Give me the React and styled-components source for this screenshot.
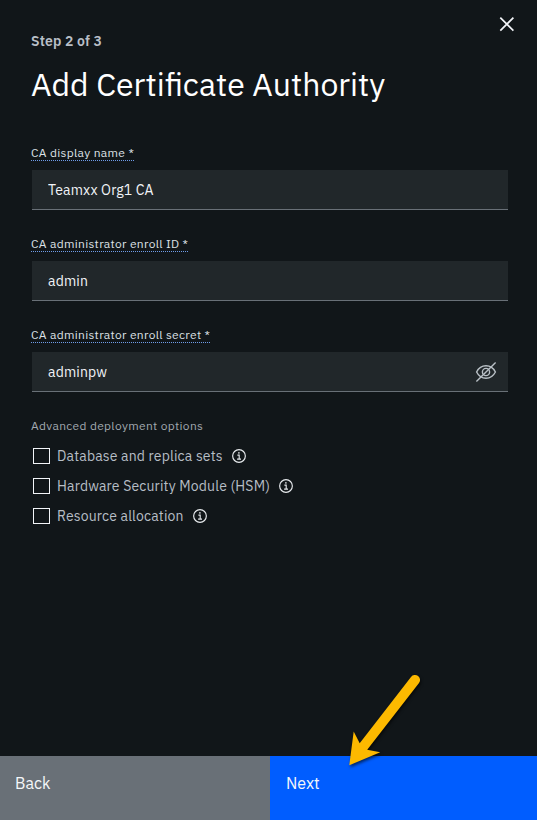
import React from 'react';
import styled, { createGlobalStyle } from 'styled-components';

const GlobalStyle = createGlobalStyle`
  * { box-sizing: border-box; }
  body {
    margin: 0;
    background: #111619;
    font-family: "IBM Plex Sans", Roboto, "Liberation Sans", sans-serif;
  }
`;

const Panel = styled.div`
  position: relative;
  display: flex;
  flex-direction: column;
  width: 537px;
  height: 820px;
  overflow: hidden;
  background: #111619;
`;

const CloseButton = styled.button`
  position: absolute;
  top: 14px;
  right: 20px;
  width: 20px;
  height: 20px;
  padding: 0;
  border: 0;
  background: none;
  svg { display: block; }
`;

const Header = styled.header`
  padding: 32px 31px 0;
`;

const Step = styled.div`
  font-size: 14px;
  font-weight: 600;
  line-height: 18px;
  letter-spacing: 0.16px;
  color: #b9bfc7;
`;

const Title = styled.h1`
  margin: 14px 0 0;
  font-size: 32px;
  font-weight: 400;
  line-height: 40px;
  color: #fff;
  white-space: nowrap;
`;

const Form = styled.form`
  display: flex;
  flex: 1;
  flex-direction: column;
  padding: 41px 29px 0 32px;
`;

const Field = styled.div`
  height: 91px;
`;

const Label = styled.label`
  display: block;
  width: fit-content;
  height: 16px;
  margin: 0 0 9px -1px;
  border-bottom: 1px dotted #6f9ce8;
  font-size: 12px;
  line-height: 16px;
  letter-spacing: 0.32px;
  color: #dde1e6;
  white-space: nowrap;
`;

const InputBox = styled.div`
  display: flex;
  align-items: center;
  height: 40px;
  padding-right: 11px;
  border-bottom: 1px solid #697077;
  background: #21272a;
`;

const Input = styled.input`
  flex: 1;
  min-width: 0;
  height: 39px;
  padding: 0 0 0 16px;
  border: 0;
  outline: 0;
  background: transparent;
  font: 400 14px/20px "IBM Plex Sans", Roboto, "Liberation Sans", sans-serif;
  letter-spacing: 0.16px;
  color: #f2f4f8;
`;

const Legend = styled.div`
  height: 16px;
  margin: 0 0 7px -1px;
  font-size: 12px;
  line-height: 16px;
  letter-spacing: 0.32px;
  color: #a2a9b0;
`;

const Option = styled.div`
  display: flex;
  align-items: center;
  height: 30px;
  padding-left: 1px;
`;

const Checkbox = styled.span`
  width: 17px;
  height: 16px;
  margin-right: 7px;
  border: 1px solid #f2f4f8;
`;

const OptionText = styled.span`
  margin-right: 9px;
  font-size: 14px;
  line-height: 20px;
  letter-spacing: 0.16px;
  color: #b7bec6;
  white-space: nowrap;
`;

const Footer = styled.footer`
  display: flex;
  height: 64px;
`;

const Action = styled.button`
  width: ${(p) => p.$width};
  padding: 0 0 10px ${(p) => p.$inset};
  border: 0;
  background: ${(p) => p.$color};
  font: 400 16px/22px "IBM Plex Sans", Roboto, "Liberation Sans", sans-serif;
  text-align: left;
  color: #f5f7fa;
`;

const Pointer = styled.svg`
  position: absolute;
  left: 340px;
  top: 665px;
  filter: drop-shadow(1px 2px 1.5px rgba(0, 0, 0, 0.6));
  pointer-events: none;
`;

const InfoIcon = () => (
  <svg width="14" height="14" viewBox="0 0 14 14" fill="none" stroke="#e8ebee">
    <circle cx="7" cy="7" r="6.35" strokeWidth="1.15" />
    <path d="M5.4 6.15H7.2V10.1M5.1 10.1H9" strokeWidth="1.1" />
    <circle cx="6.9" cy="3.9" r=".8" fill="#e8ebee" stroke="none" />
  </svg>
);

const HiddenIcon = () => (
  <svg width="22" height="22" viewBox="0 0 22 22" fill="none" stroke="#b9c0c6" strokeWidth="1.4">
    <path d="M1.6 11C3.5 7.2 7 4.8 11 4.8S18.5 7.2 20.4 11C18.5 14.8 15 17.2 11 17.2S3.5 14.8 1.6 11Z" />
    <circle cx="11" cy="11" r="3.6" />
    <path d="M1.4 20.5L20.6 1.5" />
  </svg>
);

const fields = [
  { label: 'CA display name *', value: 'Teamxx Org1 CA' },
  { label: 'CA administrator enroll ID *', value: 'admin' },
  { label: 'CA administrator enroll secret *', value: 'adminpw', hidden: true },
];

const options = [
  'Database and replica sets',
  'Hardware Security Module (HSM)',
  'Resource allocation',
];

export default function App() {
  return (
    <>
      <GlobalStyle />
      <Panel>
        <CloseButton aria-label="Close">
          <svg width="20" height="20" viewBox="0 0 20 20" stroke="#f2f4f8" strokeWidth="1.7">
            <path d="M3.3 3.6L16.4 16.7M16.4 3.6L3.3 16.7" />
          </svg>
        </CloseButton>
        <Header>
          <Step>Step 2 of 3</Step>
          <Title>Add Certificate Authority</Title>
        </Header>
        <Form>
          {fields.map((f) => (
            <Field key={f.label}>
              <Label>{f.label}</Label>
              <InputBox>
                <Input defaultValue={f.value} />
                {f.hidden && <HiddenIcon />}
              </InputBox>
            </Field>
          ))}
          <Legend>Advanced deployment options</Legend>
          {options.map((text) => (
            <Option key={text}>
              <Checkbox />
              <OptionText>{text}</OptionText>
              <InfoIcon />
            </Option>
          ))}
        </Form>
        <Footer>
          <Action $width="270px" $inset="15px" $color="#697077">Back</Action>
          <Action $width="267px" $inset="16px" $color="#005dff">Next</Action>
        </Footer>
        <Pointer width="90" height="110" viewBox="340 665 90 110" fill="#fdb900">
          <path d="M349.3 765.3L353.7 731.5L359.7 743.3L411 676.9A5 5 0 0 1 419 683.1L367.2 749.7L380.2 752.3Z" />
        </Pointer>
      </Panel>
    </>
  );
}
